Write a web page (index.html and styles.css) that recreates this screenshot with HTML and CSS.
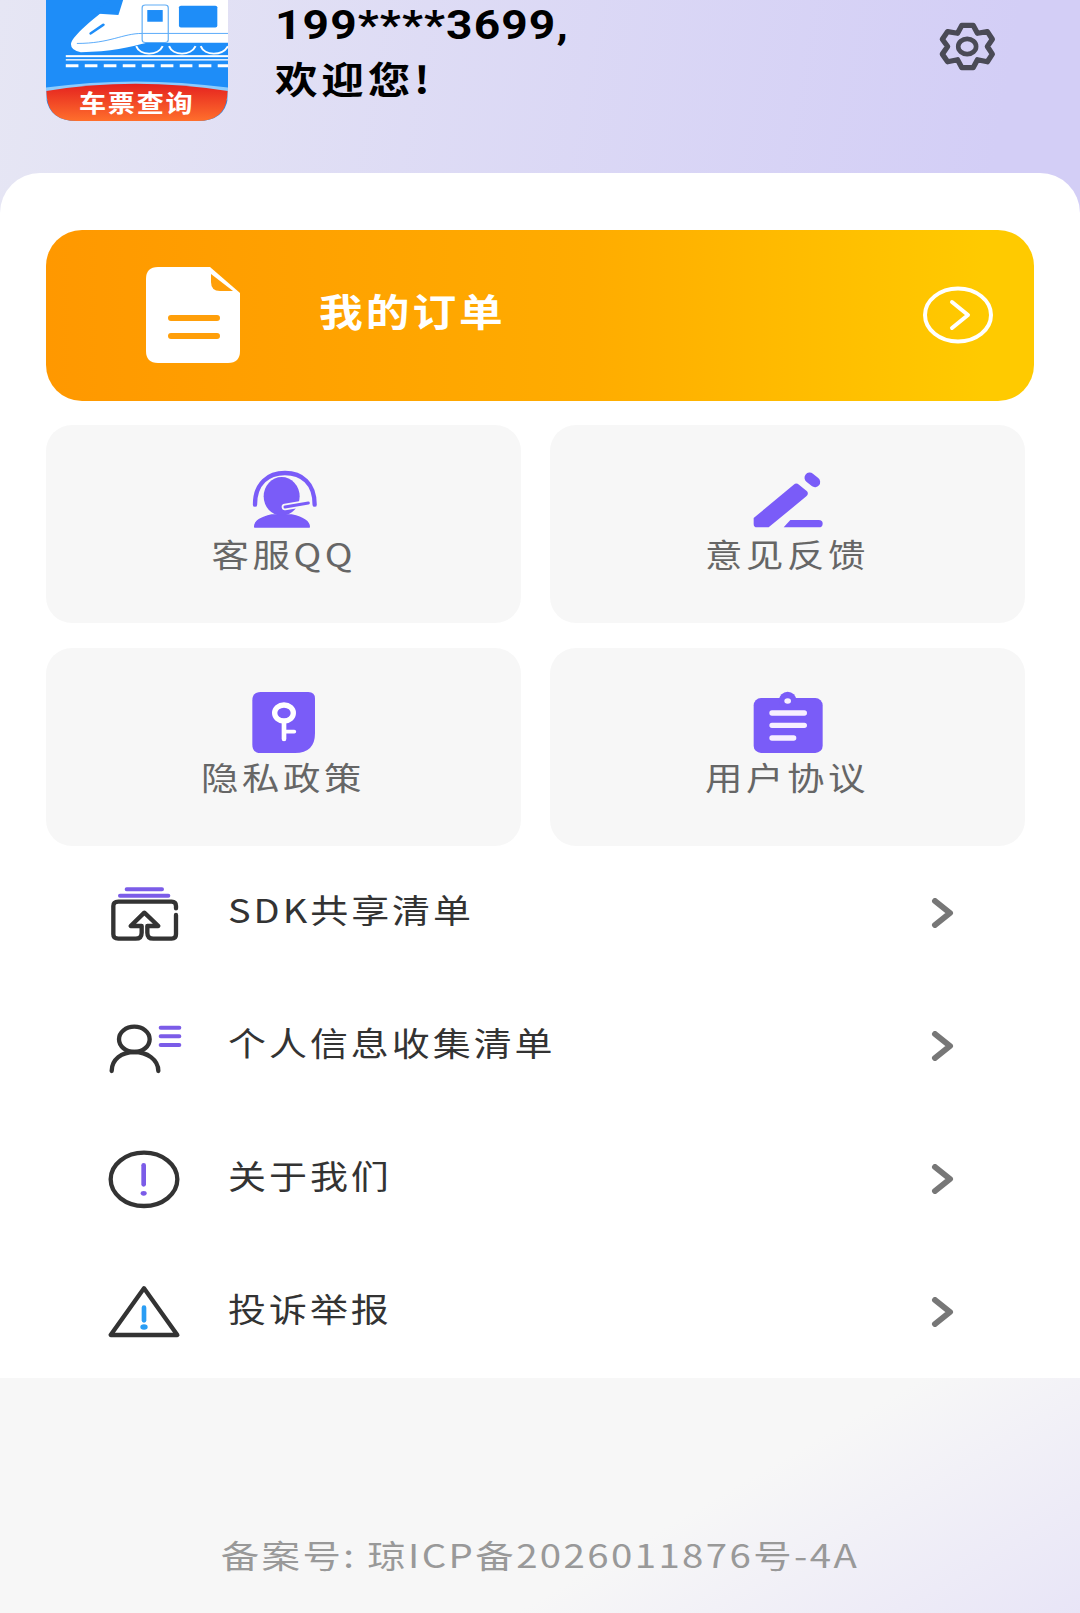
FILE: index.html
```html
<!DOCTYPE html>
<html lang="zh-CN">
<head>
    <meta charset="UTF-8">
    <meta name="viewport" content="width=device-width, initial-scale=1.0">
    <title>我的</title>
    <link rel="stylesheet" href="styles.css">
</head>
<body>
    <svg class="sprites" width="0" height="0">
        <symbol id="chevron" viewBox="0 0 24 30">
            <polyline points="4,3 19,15 4,27" fill="none" stroke="#777" stroke-width="6" stroke-linecap="round" stroke-linejoin="round"/>
        </symbol>
    </svg>

    <header class="top-bar">
        <div class="logo">
            <svg class="logo-art" viewBox="117 0 460 362" preserveAspectRatio="none">
                <defs>
                    <linearGradient id="band" x1="0" y1="0" x2="0" y2="1">
                        <stop offset="0" stop-color="#e4211f"/>
                        <stop offset="1" stop-color="#ff6f2c"/>
                    </linearGradient>
                </defs>
                <path d="M117 0H577V290Q570 362 500 362H195Q125 362 117 290Z" fill="#1e8df8"/>
                <path d="M180 132C185 105 235 60 285 10L300 0H577V128H372C330 140 280 156 205 156Q180 152 180 132Z" fill="#fff"/>
                <path d="M232 40L282 0H312L300 45Z" fill="#1e8df8"/>
                <path d="M230 100L262 74" stroke="#1e8df8" stroke-width="7" stroke-linecap="round"/>
                <path d="M195 130C280 130 310 100 360 100H577" fill="none" stroke="#1e8df8" stroke-width="2"/>
                <rect x="360" y="15" width="66" height="112" rx="8" fill="none" stroke="#62aef5" stroke-width="3"/>
                <rect x="373" y="30" width="39" height="35" fill="#1e8df8"/>
                <rect x="453" y="17" width="97" height="65" rx="5" fill="#1e8df8"/>
                <g fill="none" stroke="#fff" stroke-width="5">
                    <path d="M345 138C355 168 400 168 412 138"/>
                    <path d="M428 138C438 168 483 168 495 138"/>
                    <path d="M508 138C518 168 563 168 577 138"/>
                </g>
                <rect x="167" y="165" width="410" height="6" fill="#fff"/>
                <rect x="167" y="177" width="410" height="4" fill="#fff"/>
                <path d="M167 197H577" stroke="#fff" stroke-width="9" stroke-dasharray="32 16"/>
                <path d="M117 262Q340 226 577 262V300H117Z" fill="#8ccbfd"/>
                <path d="M118 272Q340 229 576 272L575 290Q568 362 500 362H195Q125 362 119 290Z" fill="url(#band)"/>
            </svg>
            <span class="logo-text">车票查询</span>
        </div>
        <div class="greeting">
            <div class="phone">199****3699,</div>
            <div class="welcome">欢迎您!</div>
        </div>
        <svg class="gear" viewBox="170 60 184 160">
            <path d="M245 76H279L292 100L322 95L337 118L322 140L337 163L322 186L292 180L279 204H245L232 180L202 186L186 163L202 140L186 118L202 95L232 100Z" fill="none" stroke="#4a4a56" stroke-width="16" stroke-linejoin="round"/>
            <ellipse cx="261" cy="140" rx="27" ry="23" fill="none" stroke="#4a4a56" stroke-width="14"/>
        </svg>
    </header>

    <main class="panel">
        <a class="order-card">
            <svg class="doc-icon" viewBox="0 0 94 96">
                <path d="M12 0H64L94 26V84Q94 96 82 96H12Q0 96 0 84V12Q0 0 12 0Z" fill="#fff"/>
                <path d="M65 7L87 24H74Q65 24 65 15Z" fill="#ff9f0a"/>
                <path d="M25 51H71M25 69H71" stroke="#ff9f0a" stroke-width="6" stroke-linecap="round"/>
            </svg>
            <span class="order-title">我的订单</span>
            <svg class="order-arrow" viewBox="0 0 70 58">
                <ellipse cx="35" cy="29" rx="33" ry="26.5" fill="none" stroke="#fff" stroke-width="4"/>
                <polyline points="29,16 45,29 29,42" fill="none" stroke="#fff" stroke-width="4" stroke-linecap="round" stroke-linejoin="round"/>
            </svg>
        </a>

        <section class="tile-grid">
            <a class="tile">
                <svg class="tile-icon" viewBox="210 58 200 186">
                    <path d="M225 165C225 100 265 70 315 70C365 70 404 100 404 165" fill="none" stroke="#7a5cf8" stroke-width="13" stroke-linecap="round"/>
                    <ellipse cx="305" cy="140" rx="54" ry="58" fill="#7a5cf8"/>
                    <path d="M224 232Q222 208 275 196H335Q388 208 388 232Z" fill="#7a5cf8" stroke="#7a5cf8" stroke-width="4" stroke-linejoin="round"/>
                    <path d="M315 172L385 160" stroke="#f7f7f7" stroke-width="20" stroke-linecap="round"/>
                    <path d="M315 172L385 160" stroke="#7a5cf8" stroke-width="9" stroke-linecap="round"/>
                </svg>
                <span class="tile-label">客服QQ</span>
            </a>
            <a class="tile">
                <svg class="tile-icon" viewBox="182 58 222 186">
                    <path d="M190 205L310 105Q318 98 326 105L350 125Q356 132 348 140L235 233H200Q190 233 190 223Z" fill="#7a5cf8"/>
                    <path d="M358 84L374 97" stroke="#7a5cf8" stroke-width="31" stroke-linecap="round"/>
                    <path d="M280 233L300 211H385Q397 211 397 222Q397 233 385 233Z" fill="#7a5cf8"/>
                </svg>
                <span class="tile-label">意见反馈</span>
            </a>
            <a class="tile">
                <svg class="tile-icon" viewBox="210 67 200 186">
                    <path d="M242 67H385Q405 67 405 87V190Q405 250 345 250H242Q217 250 217 225V92Q217 67 242 67Z" fill="#7a5cf8"/>
                    <ellipse cx="312" cy="130" rx="28" ry="24" fill="none" stroke="#fff" stroke-width="16"/>
                    <path d="M312 155V208" stroke="#fff" stroke-width="14" stroke-linecap="round"/>
                    <path d="M312 186H343" stroke="#fff" stroke-width="11" stroke-linecap="round"/>
                </svg>
                <span class="tile-label">隐私政策</span>
            </a>
            <a class="tile">
                <svg class="tile-icon" viewBox="182 67 222 186">
                    <rect x="190" y="85" width="207" height="165" rx="22" fill="#7a5cf8"/>
                    <ellipse cx="292" cy="92" rx="26" ry="26" fill="#7a5cf8"/>
                    <ellipse cx="292" cy="94" rx="10" ry="8" fill="#f7f0ff"/>
                    <path d="M245 130H342M245 167H342M245 205H310" stroke="#f7f0ff" stroke-width="16" stroke-linecap="round"/>
                </svg>
                <span class="tile-label">用户协议</span>
            </a>
        </section>

        <ul class="menu">
            <li class="menu-row">
                <svg class="menu-icon" viewBox="60 39 210 174">
                    <path d="M110 55H216M90 74H235" stroke="#7b5ce8" stroke-width="12" stroke-linecap="round"/>
                    <path d="M258 132V190Q258 203 245 203H190Q172 203 172 185V165H205L163 125L122 165H155V185Q155 203 137 203H85Q70 203 70 190V105Q70 92 85 92H245Q258 92 258 105V112" fill="none" stroke="#333" stroke-width="13" stroke-linecap="round" stroke-linejoin="round"/>
                </svg>
                <span class="menu-text">SDK共享清单</span>
                <svg class="menu-chevron"><use href="#chevron"/></svg>
            </li>
            <li class="menu-row">
                <svg class="menu-icon" viewBox="60 438 210 174">
                    <ellipse cx="133" cy="505" rx="46" ry="38" fill="none" stroke="#333" stroke-width="13"/>
                    <path d="M65 600C65 565 95 543 133 543C170 543 205 565 205 600" fill="none" stroke="#333" stroke-width="13" stroke-linecap="round"/>
                    <path d="M212 470H268M212 496H268M212 522H268" stroke="#7b5ce8" stroke-width="12" stroke-linecap="round"/>
                </svg>
                <span class="menu-text">个人信息收集清单</span>
                <svg class="menu-chevron"><use href="#chevron"/></svg>
            </li>
            <li class="menu-row">
                <svg class="menu-icon" viewBox="60 57 210 174">
                    <ellipse cx="162" cy="145" rx="100" ry="80" fill="none" stroke="#333" stroke-width="13"/>
                    <path d="M161 103V160" stroke="#7b5ce8" stroke-width="14" stroke-linecap="round"/>
                    <ellipse cx="161" cy="187" rx="9" ry="7" fill="#7b5ce8"/>
                </svg>
                <span class="menu-text">关于我们</span>
                <svg class="menu-chevron"><use href="#chevron"/></svg>
            </li>
            <li class="menu-row">
                <svg class="menu-icon" viewBox="60 456 210 174">
                    <path d="M162 472L262 612H62Z" fill="none" stroke="#333" stroke-width="13" stroke-linejoin="round"/>
                    <path d="M162 530V568" stroke="#2a9df4" stroke-width="14" stroke-linecap="round"/>
                    <ellipse cx="162" cy="588" rx="11" ry="8" fill="#2a9df4"/>
                </svg>
                <span class="menu-text">投诉举报</span>
                <svg class="menu-chevron"><use href="#chevron"/></svg>
            </li>
        </ul>
    </main>

    <footer class="record">
        <span class="record-text">备案号: 琼ICP备2026011876号-4A</span>
    </footer>
</body>
</html>
```

FILE: styles.css
```css
body {
    margin: 0;
    width: 1080px;
    height: 1613px;
    overflow: hidden;
    display: flex;
    flex-direction: column;
    font-family: "Noto Sans CJK SC", "Noto Sans", sans-serif;
    background: linear-gradient(100deg, #e6e6f4, #d3cef6 75%);
}
.sprites {
    display: block;
    height: 0;
}
.top-bar {
    height: 173px;
    padding: 0 82px 0 46px;
    display: flex;
    align-items: flex-start;
    box-sizing: border-box;
}
.logo {
    position: relative;
    width: 182px;
    height: 121px;
    flex: none;
}
.logo-art {
    display: block;
    width: 100%;
    height: 100%;
}
.logo-text {
    position: absolute;
    left: 33px;
    bottom: 5px;
    font-size: 24px;
    line-height: 28px;
    font-weight: 700;
    letter-spacing: 1.5px;
    color: #fff;
    white-space: nowrap;
    transform: scaleX(1.13);
    transform-origin: left;
}
.greeting {
    margin-left: 47px;
    color: #000;
    font-weight: 700;
}
.phone {
    font-family: Roboto, "Noto Sans CJK SC", sans-serif;
    font-size: 41px;
    line-height: 50px;
    letter-spacing: 1px;
    transform: scaleX(1.125);
    transform-origin: left;
}
.welcome {
    font-size: 37px;
    line-height: 56px;
    letter-spacing: 3.3px;
    transform: scaleX(1.15);
    transform-origin: left;
}
.gear {
    width: 61px;
    height: 53px;
    margin: 20px 0 0 auto;
    flex: none;
}
.panel {
    background: #fff;
    border-radius: 40px 40px 0 0;
    padding-top: 57px;
}
.order-card {
    margin: 0 46px;
    height: 171px;
    padding: 0 41px 0 100px;
    display: flex;
    align-items: center;
    border-radius: 36px;
    background: linear-gradient(90deg, #ff9800, #ffac00 55%, #ffca00 95%);
}
.doc-icon {
    width: 94px;
    height: 96px;
    margin-bottom: 2px;
    flex: none;
}
.order-title {
    margin: 0 0 12px 79px;
    font-size: 38px;
    font-weight: 700;
    letter-spacing: 2.6px;
    color: #fff;
    transform: scaleX(1.15);
    transform-origin: left;
}
.order-arrow {
    width: 70px;
    height: 58px;
    margin: 0 0 2px auto;
}
.tile-grid {
    margin: 24px 55px 0 46px;
    display: grid;
    grid-template-columns: 475px 475px;
    grid-auto-rows: 198px;
    column-gap: 29px;
    row-gap: 25px;
}
.tile {
    background: #f7f7f7;
    border-radius: 26px;
    padding-top: 44px;
    box-sizing: border-box;
    display: flex;
    flex-direction: column;
    align-items: center;
}
.tile-icon {
    height: 62px;
    flex: none;
    overflow: visible;
}
.tile-label {
    font-size: 32px;
    line-height: 44px;
    letter-spacing: 3px;
    color: #666;
    transform: scaleX(1.17);
}
.menu {
    margin: 0;
    padding: 0;
    list-style: none;
}
.menu-row {
    height: 133px;
    padding: 0 125px 0 110px;
    display: flex;
    align-items: center;
}
.menu-icon {
    width: 70px;
    height: 58px;
    flex: none;
    overflow: visible;
}
.menu-text {
    margin: 0 0 8px 48px;
    font-size: 33px;
    letter-spacing: 2.6px;
    color: #333;
    transform: scaleX(1.15);
    transform-origin: left;
}
.menu-chevron {
    width: 24px;
    height: 30px;
    margin-left: auto;
}
.record {
    flex: 1;
    padding-top: 152px;
    box-sizing: border-box;
    text-align: center;
    line-height: 48px;
    background: linear-gradient(150deg, #f7f7f7 62%, #e8e5f7);
}
.record-text {
    display: inline-block;
    font-size: 32px;
    letter-spacing: 2px;
    color: #999;
    transform: scaleX(1.2);
}
```
